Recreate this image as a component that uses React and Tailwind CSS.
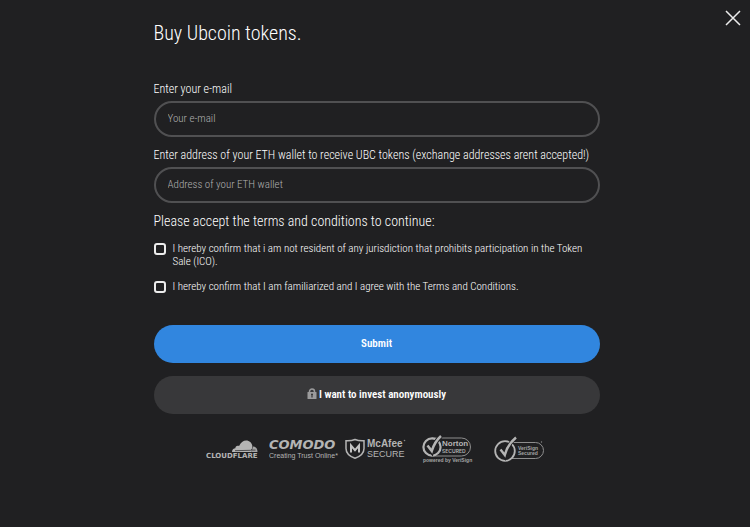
import React, { useState } from 'react';

const terms = [
  {
    id: 'residency',
    text: 'I hereby confirm that i am not resident of any jurisdiction that prohibits participation in the Token Sale (ICO).',
  },
  {
    id: 'agreement',
    text: 'I hereby confirm that I am familiarized and I agree with the Terms and Conditions.',
  },
];

function CloseIcon() {
  return (
    <svg width="16" height="16" viewBox="0 0 16 16" fill="none" stroke="currentColor" strokeWidth="1.5" aria-hidden="true">
      <path d="M1 1l14 14M15 1L1 15" />
    </svg>
  );
}

function LockIcon() {
  return (
    <svg width="10" height="14" viewBox="0 0 10 14" aria-hidden="true">
      <path d="M2.5 5V3.500a2.500 2.500 0 0 1 5 0V5" fill="none" stroke="#9b9b9c" strokeWidth="1.5" />
      <rect x="0.5" y="4" width="9" height="7" rx="0.6" fill="#9b9b9c" />
      <path d="M5 5.500v4M4 6.500h2" stroke="#38383a" strokeWidth="1.2" />
    </svg>
  );
}

function CloudflareLogo() {
  return (
    <svg width="59" height="30" viewBox="0 0 59 30" role="img" aria-label="Cloudflare">
      <path d="M26 17c0-2.300 1.500-3.800 3.400-3.800-.2-2 2-3.200 3.700-2.100C34.500 7.400 37.300 5.500 40.200 5.500c3.300 0 5.500 2.300 6.200 5.400l-1 6.100z" fill="#b4b4b4" />
      <path d="M47 11.500c2.700 0 4.500 2.200 4.500 5.500h-6.300z" fill="#a4a4a4" />
      <path d="M29 15.700l15.200-.4c1 0 1.500-.5 1.800-1.500M45.500 15.100h4" fill="none" stroke="#202022" strokeWidth="0.7" />
      <text x="0" y="23" fontSize="7" fontWeight="700" fontFamily="'DejaVu Sans', sans-serif" fill="#b4b4b4">CLOUDFLARE</text>
    </svg>
  );
}

function ComodoLogo() {
  return (
    <svg width="72" height="30" viewBox="0 0 72 30" role="img" aria-label="Comodo, Creating Trust Online">
      <text x="0" y="14" fontSize="13" fontWeight="700" fontStyle="italic" fontFamily="'DejaVu Sans', sans-serif" fill="#b4b4b4">COMODO</text>
      <text x="0" y="23" fontSize="7" fontFamily="'Liberation Sans', sans-serif" fill="#b4b4b4">Creating Trust Online*</text>
    </svg>
  );
}

function McAfeeLogo() {
  return (
    <svg width="73" height="30" viewBox="0 0 73 30" role="img" aria-label="McAfee Secure">
      <path d="M10 4.500C7 5.700 4 5.900 1 5.700v7.800c0 5.500 4 8 9 9.800 5-1.800 9-4.300 9-9.800V5.700C16 5.900 13 5.700 10 4.500z" fill="#202022" stroke="#b4b4b4" strokeWidth="1.5" />
      <path d="M6 17.500v-7l4 4.700 4-4.700v7" fill="none" stroke="#c4c4c4" strokeWidth="2" />
      <text x="22" y="12" fontSize="10" fontWeight="700" fontFamily="'Liberation Sans', sans-serif" fill="#b4b4b4">McAfee</text>
      <text x="22" y="22" fontSize="9" fontFamily="'Liberation Sans', sans-serif" fill="#b4b4b4">SECURE</text>
      <circle cx="59.5" cy="5.5" r="0.8" fill="#888" />
    </svg>
  );
}

function NortonLogo() {
  return (
    <svg width="68" height="30" viewBox="0 0 68 30" role="img" aria-label="Norton Secured, powered by VeriSign">
      <path d="M10 3h29.500a9 9 0 0 1 0 18H10" fill="none" stroke="#8e8e8e" strokeWidth="1" />
      <circle cx="10" cy="12" r="8.600" fill="#202022" stroke="#b4b4b4" strokeWidth="2.200" />
      <path d="M5.500 10.500l4.300 6C11.500 10 14 5.500 19 1" fill="none" stroke="#202022" strokeWidth="4.500" />
      <path d="M5.500 10.500l4.300 5.500C11.500 10 14 5.500 19 1" fill="none" stroke="#b4b4b4" strokeWidth="2.500" />
      <text x="20" y="11" fontSize="8" fontWeight="700" fontFamily="'Liberation Sans', sans-serif" fill="#b4b4b4">Norton</text>
      <text x="20" y="18" fontSize="5" fontWeight="600" fontFamily="Inter, sans-serif" fill="#b4b4b4">SECURED</text>
      <text x="1" y="27" fontSize="5" fontWeight="600" fontFamily="'Liberation Sans', sans-serif" fill="#a4a4a4">powered by VeriSign</text>
    </svg>
  );
}

function VeriSignLogo() {
  return (
    <svg width="51" height="30" viewBox="0 0 51 30" role="img" aria-label="VeriSign Secured">
      <path d="M11 7.500h30.500a8 8 0 0 1 0 16H11" fill="none" stroke="#8e8e8e" strokeWidth="1" />
      <circle cx="11" cy="16" r="9.800" fill="#202022" stroke="#b4b4b4" strokeWidth="1.800" />
      <path d="M6.500 14.500l4.300 6.500C12.500 13.500 16 7.500 22 2.500" fill="none" stroke="#202022" strokeWidth="4" />
      <path d="M6.500 14.500l4.300 5.500C12.500 13 16 7.500 22 2.500" fill="none" stroke="#b4b4b4" strokeWidth="2.400" />
      <text x="24" y="15" fontSize="5" fontWeight="700" fontFamily="'Liberation Sans', sans-serif" fill="#a4a4a4">VeriSign</text>
      <text x="24" y="20" fontSize="5" fontWeight="700" fontFamily="'Liberation Sans', sans-serif" fill="#a4a4a4">Secured</text>
      <circle cx="47.5" cy="7" r="0.700" fill="#888" />
    </svg>
  );
}

export default function App() {
  const [email, setEmail] = useState('');
  const [wallet, setWallet] = useState('');
  const [accepted, setAccepted] = useState({});

  const toggleTerm = (id) => {
    setAccepted((prev) => ({ ...prev, [id]: !prev[id] }));
  };

  return (
    <div className="relative min-h-screen bg-[#202022] pl-[3px] font-['Roboto_Condensed','Liberation_Sans_Narrow',Roboto,sans-serif] font-light text-white">
      <button type="button" aria-label="Close" className="absolute top-2.5 right-[9px] text-[#ececec]">
        <CloseIcon />
      </button>

      <main className="mx-auto w-full max-w-[446px] pt-[21px]">
        <h1 className="text-xl leading-6 font-light">Buy Ubcoin tokens.</h1>

        <form className="mt-9" onSubmit={(e) => e.preventDefault()}>
          <label htmlFor="email" className="block text-xs leading-4">Enter your e-mail</label>
          <input
            id="email"
            type="email"
            value={email}
            onChange={(e) => setEmail(e.target.value)}
            placeholder="Your e-mail"
            className="mt-1 block h-9 w-full rounded-full border-2 border-[#505052] px-3 pb-0.5 text-[11px] outline-none placeholder:text-[#b0b0b1]"
          />

          <label htmlFor="wallet" className="mt-2.5 block text-xs leading-4">
            Enter address of your ETH wallet to receive UBC tokens (exchange addresses arent accepted!)
          </label>
          <input
            id="wallet"
            type="text"
            value={wallet}
            onChange={(e) => setWallet(e.target.value)}
            placeholder="Address of your ETH wallet"
            className="mt-1 block h-9 w-full rounded-full border-2 border-[#505052] px-3 pb-0.5 text-[11px] outline-none placeholder:text-[#b0b0b1]"
          />

          <fieldset className="mt-2">
            <legend className="text-sm leading-5">Please accept the terms and conditions to continue:</legend>
            <div className="mt-[11px] space-y-3">
              {terms.map((term) => (
                <div key={term.id} className="flex items-start gap-[7px]">
                  <input
                    id={term.id}
                    type="checkbox"
                    checked={!!accepted[term.id]}
                    onChange={() => toggleTerm(term.id)}
                    className="mt-px size-3 shrink-0 appearance-none rounded-[3px] border-2 border-[#ececec] checked:bg-[#3186df]"
                  />
                  <label htmlFor={term.id} className="max-w-[420px] text-[11px] leading-[13px]">{term.text}</label>
                </div>
              ))}
            </div>
          </fieldset>

          <button type="submit" className="mt-8 block h-[38px] w-full rounded-full bg-[#3186df] text-[11px] font-semibold">
            Submit
          </button>
          <button type="button" className="mt-[13px] flex h-[38px] w-full items-center justify-center gap-0.5 rounded-full bg-[#38383a] text-[11px] font-semibold">
            <LockIcon />
            I want to invest anonymously
          </button>
        </form>

        <div className="mt-[21px] flex items-start justify-center gap-1 pr-0.5">
          <CloudflareLogo />
          <ComodoLogo />
          <McAfeeLogo />
          <NortonLogo />
          <VeriSignLogo />
        </div>
      </main>
    </div>
  );
}
